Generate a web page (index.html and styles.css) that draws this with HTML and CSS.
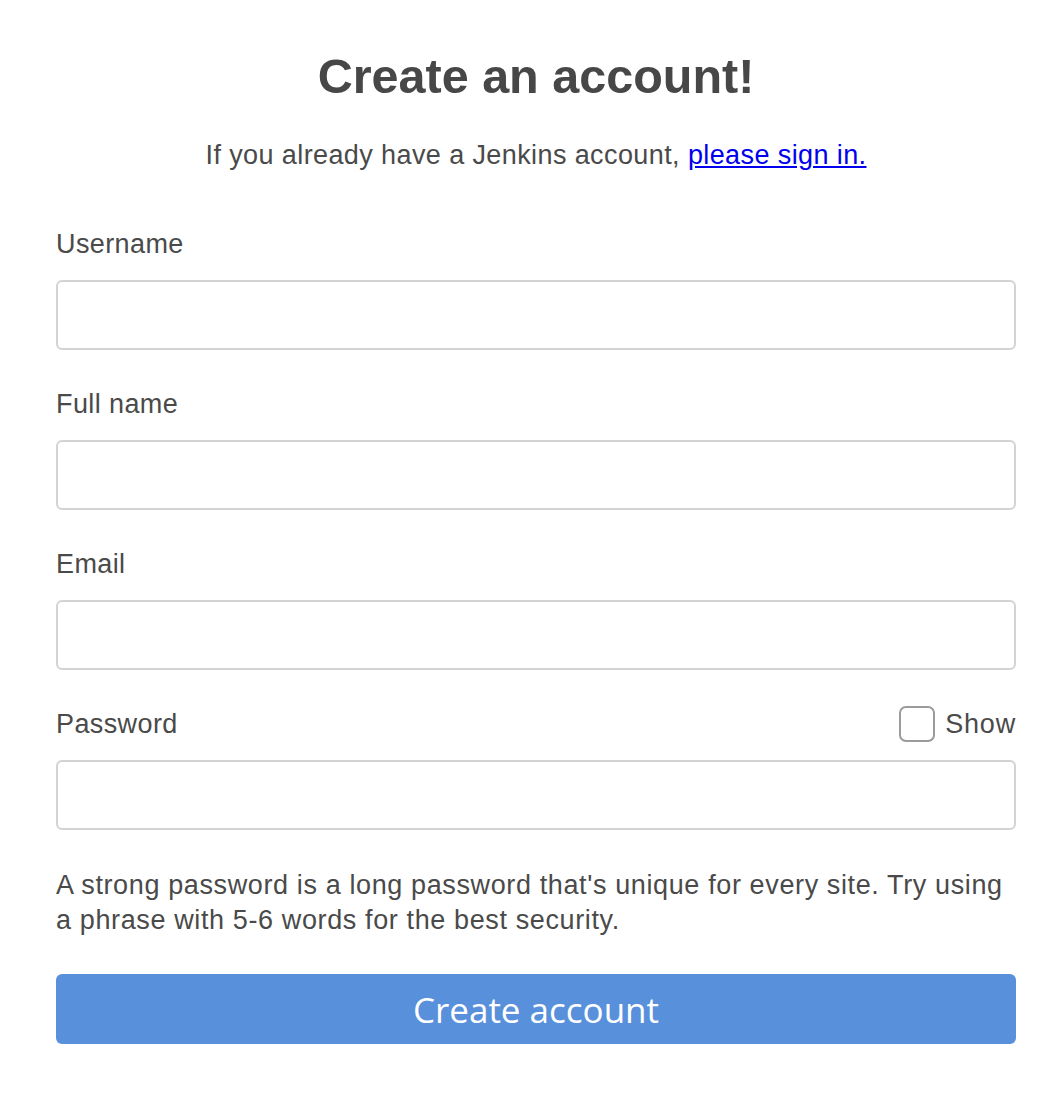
FILE: index.html
```html
<!DOCTYPE html>
<html lang="en">
<head>
<meta charset="utf-8">
<title>Create an account!</title>
<link rel="stylesheet" href="styles.css">
</head>
<body>
<main class="signup">
  <h1 class="title">Create an account!</h1>
  <p class="subtitle">If you already have a Jenkins account, <a href="#" class="signin-link">please sign in.</a></p>
  <form class="form">
    <div class="field">
      <label class="label" for="username">Username</label>
      <input class="input" id="username" type="text">
    </div>
    <div class="field">
      <label class="label" for="fullname">Full name</label>
      <input class="input" id="fullname" type="text">
    </div>
    <div class="field">
      <label class="label" for="email">Email</label>
      <input class="input" id="email" type="text">
    </div>
    <div class="field">
      <div class="label-row">
        <label class="label" for="password">Password</label>
        <label class="show">
          <input type="checkbox" class="checkbox">
          <span class="box"></span>
          <span class="show-text">Show</span>
        </label>
      </div>
      <input class="input" id="password" type="password">
    </div>
    <p class="hint">A strong password is a long password that's unique for every site. Try using a phrase with 5-6 words for the best security.</p>
    <button type="button" class="submit">Create account</button>
  </form>
</main>
</body>
</html>
```
FILE: styles.css
```css
html, body {
  margin: 0;
  padding: 0;
  background: #ffffff;
}
body {
  font-family: "Liberation Sans", Arial, sans-serif;
  color: #4a4a4a;
}
.signup {
  width: 960px;
  padding: 46px 0 0;
  margin-left: 56px;
}
.title {
  margin: 0;
  text-align: center;
  font-size: 48.5px;
  line-height: 60px;
  font-weight: bold;
  color: #474747;
}
.subtitle {
  margin: 32px 0 0;
  text-align: center;
  font-size: 27px;
  letter-spacing: 0.4px;
  line-height: 34px;
}
.signin-link {
  color: #0000ee;
  text-decoration: underline;
}
.form {
  margin-top: 52px;
  display: flex;
  flex-direction: column;
}
.field {
  display: flex;
  flex-direction: column;
  margin-bottom: 34px;
}
.label {
  font-size: 27px;
  letter-spacing: 0.4px;
  line-height: 40px;
  margin-bottom: 16px;
  display: block;
}
.label-row {
  display: flex;
  justify-content: space-between;
  align-items: center;
  margin-bottom: 16px;
}
.label-row .label {
  margin-bottom: 0;
}
.input {
  box-sizing: border-box;
  height: 70px;
  width: 100%;
  border: 2px solid #d3d3d3;
  border-radius: 6px;
  margin: 0;
  padding: 0 16px;
  font-size: 24px;
  background: #fff;
  outline: none;
}
.show {
  display: flex;
  align-items: center;
  gap: 10px;
  cursor: pointer;
}
.checkbox {
  display: none;
}
.box {
  box-sizing: border-box;
  width: 36px;
  height: 36px;
  border: 2px solid #9b9b9b;
  border-radius: 7px;
  background: #fff;
}
.show-text {
  font-size: 27px;
  letter-spacing: 0.8px;
  line-height: 40px;
}
.hint {
  margin: 4px 0 0;
  font-size: 27px;
  letter-spacing: 0.62px;
  line-height: 35px;
}
.submit {
  margin-top: 36px;
  height: 70px;
  width: 100%;
  border: none;
  border-radius: 6px;
  background: #5890db;
  color: #ffffff;
  font-family: "Open Sans", sans-serif;
  font-size: 35px;
  cursor: pointer;
}
```
